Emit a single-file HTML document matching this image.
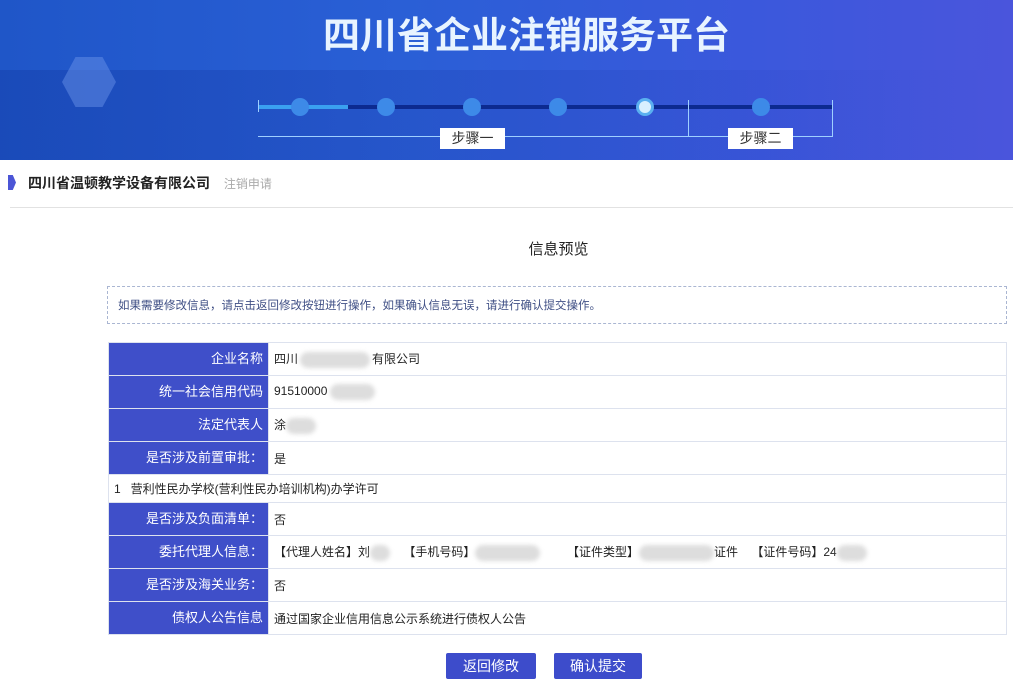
<!DOCTYPE html>
<html><head><meta charset="utf-8"><style>
*{margin:0;padding:0;box-sizing:border-box}
body{width:1013px;height:694px;background:#fff;font-family:"Liberation Sans","Noto Sans CJK SC",sans-serif;position:relative;overflow:hidden;color:#222}
.hd{position:absolute;left:0;top:0;width:1013px;height:160px;background:linear-gradient(90deg,#1f56c8 0%,#2a5fd6 40%,#3b58dc 75%,#4a55dc 100%)}
.hd .band{position:absolute;left:0;top:70px;width:100%;height:90px;background:linear-gradient(90deg,rgba(10,40,140,.25),rgba(20,40,150,.15),rgba(60,60,200,0))}
.title{position:absolute;left:20px;width:1013px;top:5px;text-align:center;font-size:37px;font-weight:bold;color:#e8f4ff;letter-spacing:0px;font-family:"Noto Sans CJK SC",sans-serif}
.cube{position:absolute;left:62px;top:57px;width:54px;height:50px;background:rgba(110,150,235,.45);clip-path:polygon(25% 0,75% 0,100% 50%,75% 100%,25% 100%,0 50%)}
.line{position:absolute;height:4px;top:105px}
.dot{position:absolute;top:98px;width:18px;height:18px;border-radius:50%;background:#3d8ae8}
.tick{position:absolute;width:1px;background:#9fd0ff}
.lab{position:absolute;top:128px;height:21px;background:#fff;color:#333;font-size:14px;text-align:center;line-height:21px}
.co{position:absolute;left:28px;top:173px;font-size:14px;font-weight:bold;color:#222}
.mk{position:absolute;left:8px;top:175px;width:8px;height:15px;background:#4b55d6;clip-path:polygon(0 0,60% 0,100% 50%,60% 100%,0 100%)}
.sep{position:absolute;left:10px;top:207px;width:1003px;height:1px;background:#e2e2e2}
.h2{position:absolute;top:238px;left:0;width:1013px;text-align:center;font-size:15px;padding-left:104px;color:#222}
.tip{position:absolute;left:107px;top:286px;width:900px;height:38px;border:1px dashed #aab6d2;font-size:11.5px;color:#3f4f85;line-height:38px;padding-left:10px}
table{position:absolute;left:108px;top:342px;width:899px;border-collapse:collapse;font-size:12px}
td{border:1px solid #dde2ee;height:33px;padding:0 5px;white-space:nowrap;vertical-align:middle}
td.k{width:160px;background:#3f4fc9;color:#fff;text-align:right;font-size:13px;line-height:16px}
.blur{display:inline-block;background:#ddd;border-radius:9px;height:16px;vertical-align:middle;filter:blur(2px)}
.btn{position:absolute;top:653px;height:26px;background:#3d4ccb;color:#fff;font-size:14px;text-align:center;line-height:26px;border-radius:2px}
</style></head><body>
<div class="hd"><div class="band"></div>
<div class="title">四川省企业注销服务平台</div>
<div class="cube"></div>
<div class="line" style="left:258px;width:90px;background:#3aa0f0"></div>
<div class="line" style="left:348px;width:484px;background:#0c2a90"></div>
<div class="tick" style="left:258px;top:100px;height:12px"></div>
<div class="tick" style="left:688px;top:100px;height:37px"></div>
<div class="tick" style="left:832px;top:100px;height:37px"></div>
<div class="tick" style="left:258px;top:136px;height:1px;width:574px"></div>
<div class="dot" style="left:291px"></div>
<div class="dot" style="left:377px"></div>
<div class="dot" style="left:463px"></div>
<div class="dot" style="left:549px"></div>
<div class="dot" style="left:636px;background:#d8f0ff;border:3px solid #5ab0f0"></div>
<div class="dot" style="left:752px"></div>
<div class="lab" style="left:440px;width:65px">步骤一</div>
<div class="lab" style="left:728px;width:65px">步骤二</div>
</div>
<div class="mk"></div>
<div class="co">四川省温顿教学设备有限公司 <span style="font-weight:normal;color:#aaa;font-size:12px;margin-left:10px">注销申请</span></div>
<div class="sep"></div>
<div class="h2">信息预览</div>
<div class="tip">如果需要修改信息，请点击返回修改按钮进行操作，如果确认信息无误，请进行确认提交操作。</div>
<table>
<tr><td class="k">企业名称</td><td>四川<span class="blur" style="width:70px;margin:0 2px"></span>有限公司</td></tr>
<tr><td class="k">统一社会信用代码</td><td>91510000<span class="blur" style="width:45px;margin-left:3px"></span></td></tr>
<tr><td class="k">法定代表人</td><td>涂<span class="blur" style="width:30px"></span></td></tr>
<tr><td class="k">是否涉及前置审批：</td><td>是</td></tr>
<tr><td colspan="2" style="height:28px">1&nbsp;&nbsp;&nbsp;营利性民办学校(营利性民办培训机构)办学许可</td></tr>
<tr><td class="k">是否涉及负面清单：</td><td>否</td></tr>
<tr><td class="k">委托代理人信息：</td><td>【代理人姓名】刘<span class="blur" style="width:20px"></span>&nbsp;&nbsp;&nbsp;&nbsp;【手机号码】<span class="blur" style="width:65px"></span>&nbsp;&nbsp;&nbsp;&nbsp;&nbsp;&nbsp;&nbsp;&nbsp;【证件类型】<span class="blur" style="width:75px"></span>证件&nbsp;&nbsp;&nbsp;&nbsp;【证件号码】24<span class="blur" style="width:30px"></span></td></tr>
<tr><td class="k">是否涉及海关业务：</td><td>否</td></tr>
<tr><td class="k">债权人公告信息</td><td>通过国家企业信用信息公示系统进行债权人公告</td></tr>
</table>
<div class="btn" style="left:446px;width:90px">返回修改</div>
<div class="btn" style="left:554px;width:88px">确认提交</div>
</body></html>
